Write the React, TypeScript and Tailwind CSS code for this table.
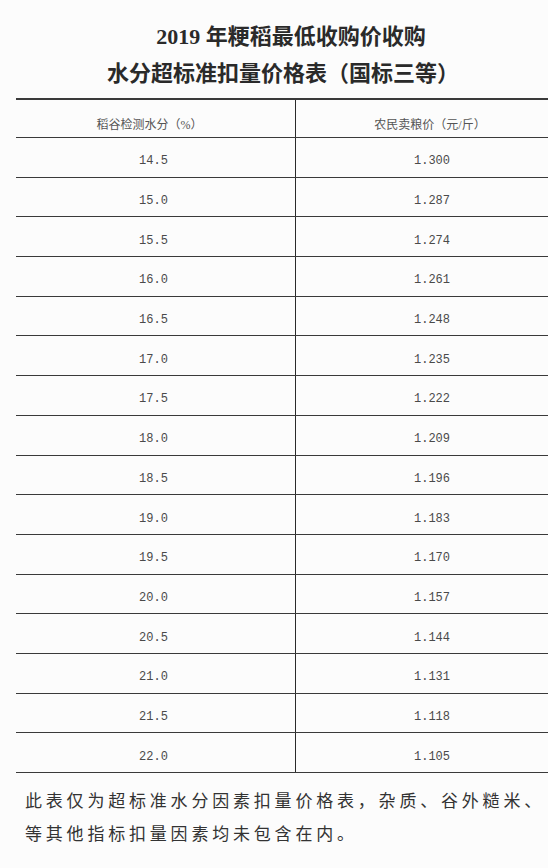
import React from "react";

const rows: [string, string][] = [
  ["14.5", "1.300"],
  ["15.0", "1.287"],
  ["15.5", "1.274"],
  ["16.0", "1.261"],
  ["16.5", "1.248"],
  ["17.0", "1.235"],
  ["17.5", "1.222"],
  ["18.0", "1.209"],
  ["18.5", "1.196"],
  ["19.0", "1.183"],
  ["19.5", "1.170"],
  ["20.0", "1.157"],
  ["20.5", "1.144"],
  ["21.0", "1.131"],
  ["21.5", "1.118"],
  ["22.0", "1.105"],
];

const cjk = { fontFamily: '"Liberation Serif", "Noto Sans CJK SC", serif' };
const mono = { fontFamily: '"Liberation Mono", "Noto Sans CJK SC", monospace' };

export default function App() {
  return (
    <div className="w-[548px] h-[868px] overflow-hidden bg-[#fcfcfc] text-[#2a2a2a]" style={cjk}>
      <div className="pt-[18px] mb-[6px] text-[22px] leading-[37px] font-bold whitespace-nowrap">
        <div className="pl-[34px] text-center">2019 年粳稻最低收购价收购</div>
        <div className="pl-[18px] text-center">水分超标准扣量价格表（国标三等）</div>
      </div>

      <div className="ml-[16px] w-[556px] border-t-2 border-[#3a3a3a]">
        <div className="flex h-[38px] border-b-[1.5px] border-[#3a3a3a] text-[12px] text-[#555]">
          <div className="w-[280px] border-r-[1.5px] border-[#2a2a2a] flex items-center justify-center pt-[12px] pr-[12px]">
            稻谷检测水分（%）
          </div>
          <div className="flex-1 flex items-center justify-center pt-[12px] pr-[8px]">
            农民卖粮价（元/斤）
          </div>
        </div>
        {rows.map(([a, b]) => (
          <div key={a} className="flex h-[39.7px] border-b-[1.5px] border-[#3a3a3a] text-[12px] text-[#4a4a4a]" style={mono}>
            <div className="w-[280px] border-r-[1.5px] border-[#2a2a2a] flex items-center justify-center pt-[8px] pr-[4px]">
              {a}
            </div>
            <div className="flex-1 flex items-center justify-center pt-[8px] pr-[4px]">
              {b}
            </div>
          </div>
        ))}
      </div>

      <div className="mt-[12px] pl-[25px] text-[17px] leading-[33px] tracking-[3.8px] text-[#333] whitespace-nowrap">
        <div>此表仅为超标准水分因素扣量价格表，杂质、谷外糙米、</div>
        <div>等其他指标扣量因素均未包含在内。</div>
      </div>
    </div>
  );
}
